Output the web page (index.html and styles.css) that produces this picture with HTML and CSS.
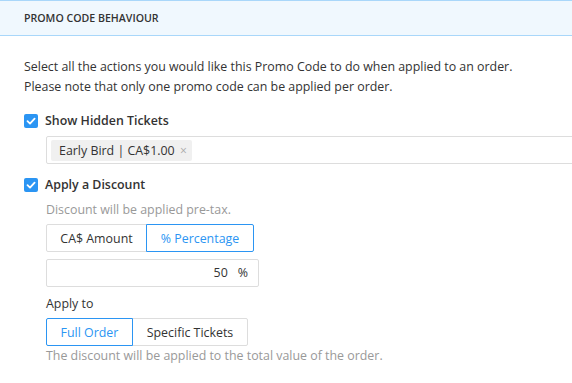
FILE: index.html
```html
<!DOCTYPE html>
<html lang="en">
<head>
    <meta charset="UTF-8">
    <title>Promo Code Behaviour</title>
    <link rel="stylesheet" href="styles.css">
</head>
<body>
    <div class="panel">
        <div class="panel-header">Promo Code Behaviour</div>
        <div class="panel-body">
            <p class="intro">Select all the actions you would like this Promo Code to do when applied to an order.<br>Please note that only one promo code can be applied per order.</p>

            <label class="check-row">
                <span class="checkbox">
                    <svg viewBox="0 0 14 14" width="14" height="14"><path d="M3.5 7.2 L6 9.6 L10.6 4.6" fill="none" stroke="#fff" stroke-width="1.8" stroke-linecap="round" stroke-linejoin="round"/></svg>
                </span>
                Show Hidden Tickets
            </label>
            <div class="tag-input">
                <span class="tag">Early Bird | CA$1.00 <span class="tag-remove">×</span></span>
            </div>

            <label class="check-row discount-row">
                <span class="checkbox">
                    <svg viewBox="0 0 14 14" width="14" height="14"><path d="M3.5 7.2 L6 9.6 L10.6 4.6" fill="none" stroke="#fff" stroke-width="1.8" stroke-linecap="round" stroke-linejoin="round"/></svg>
                </span>
                Apply a Discount
            </label>
            <div class="sub">
                <div class="hint">Discount will be applied pre-tax.</div>
                <div class="btn-group">
                    <button class="seg w-amount">CA$ Amount</button>
                    <button class="seg w-percent active">% Percentage</button>
                </div>
                <div class="amount-input">
                    <span class="amount">50</span>
                    <span class="unit">%</span>
                </div>
                <div class="label">Apply to</div>
                <div class="btn-group">
                    <button class="seg w-full active">Full Order</button>
                    <button class="seg w-specific">Specific Tickets</button>
                </div>
                <div class="hint">The discount will be applied to the total value of the order.</div>
            </div>
        </div>
    </div>
</body>
</html>
```

FILE: styles.css
```css
body {
    margin: 0;
    padding: 0;
    background: #fff;
    font-family: 'Open Sans', sans-serif;
    font-size: 12.4px;
    line-height: 20px;
    color: #333;
    overflow: hidden;
}
.panel {
    width: 600px;
}
.panel-header {
    background: #f0f8fe;
    border-top: 1px solid #a9d7fa;
    border-bottom: 1px solid #a9d7fa;
    height: 34px;
    line-height: 34px;
    padding-left: 24px;
    font-size: 10.6px;
    font-weight: 600;
    text-transform: uppercase;
    color: #333;
}
.panel-body {
    padding: 21px 0 0 24px;
}
.intro {
    margin: 0 0 14px;
}
.check-row {
    display: flex;
    align-items: center;
    gap: 7px;
    font-weight: 600;
    height: 20px;
}
.checkbox {
    width: 14px;
    height: 14px;
    border-radius: 2px;
    background: #2b95f3;
    display: flex;
    align-items: center;
    justify-content: center;
}
.tag-input {
    margin: 5px 0 0 22px;
    height: 26px;
    border: 1px solid #ddd;
    border-radius: 2px;
    display: flex;
    align-items: center;
    padding-left: 4px;
}
.tag {
    background: #f0f0f0;
    border-radius: 2px;
    padding: 0 5px 0 8px;
    line-height: 21px;
}
.tag-remove {
    color: #aaa;
    font-size: 12px;
    margin-left: 2px;
}
.discount-row {
    margin-top: 11px;
}
.sub {
    padding-left: 22px;
}
.hint {
    color: #999;
    margin-top: 5px;
}
.btn-group {
    display: flex;
    margin-top: 4px;
}
.seg {
    font-family: 'Open Sans', sans-serif;
    font-size: 12.4px;
    color: #333;
    background: #fff;
    border: 1px solid #ddd;
    height: 28px;
    padding: 0;
    margin: 0;
    text-align: center;
    cursor: pointer;
}
.seg + .seg {
    margin-left: -1px;
}
.seg:first-child {
    border-radius: 2px 0 0 2px;
}
.seg:last-child {
    border-radius: 0 2px 2px 0;
}
.seg.active {
    color: #2b95f3;
    border-color: #2b95f3;
    position: relative;
}
.w-amount { width: 101px; }
.w-percent { width: 108px; }
.w-full { width: 87px; }
.w-specific { width: 116px; }
.amount-input {
    margin-top: 7px;
    height: 26px;
    border: 1px solid #ddd;
    border-radius: 2px;
    display: flex;
    align-items: center;
    justify-content: flex-end;
    padding-right: 10px;
    width: 201px;
}
.unit {
    margin-left: 10px;
}
.label {
    margin-top: 7px;
}
.btn-group + .hint {
    margin-top: 0;
}
```
